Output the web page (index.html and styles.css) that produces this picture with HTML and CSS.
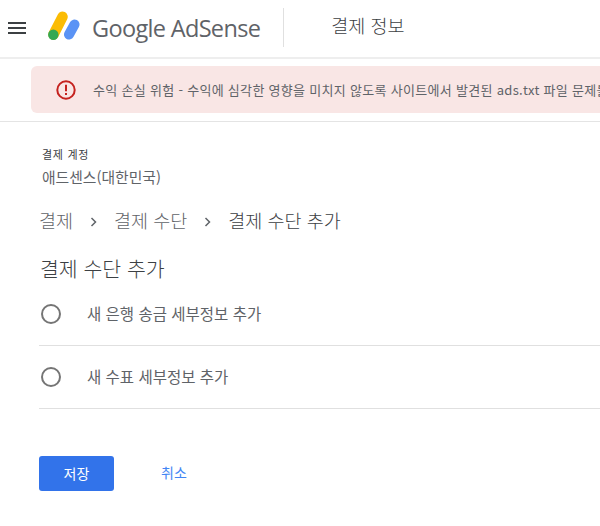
FILE: index.html
```html
<!DOCTYPE html>
<html lang="ko">
<head>
<meta charset="utf-8">
<title>결제 정보</title>
<link rel="stylesheet" href="styles.css">
</head>
<body>
<header class="topbar">
  <svg class="menu" width="18" height="12" viewBox="0 0 18 12"><path d="M0 0h18v2H0zM0 5h18v2H0zM0 10h18v2H0z" fill="#3c4043"/></svg>
  <svg class="logo" width="32" height="29" viewBox="0 0 32 29">
    <path d="M5.500 23.500L14.500 5.800" stroke="#fbbc04" stroke-width="10.500" stroke-linecap="round" fill="none"/>
    <path d="M21 23.500L26.500 13.500" stroke="#5a93f5" stroke-width="10" stroke-linecap="round" fill="none"/>
    <circle cx="5.300" cy="23.700" r="5.200" fill="#34a853"/>
  </svg>
  <span class="brand">Google AdSense</span>
  <span class="divider"></span>
  <span class="title">결제 정보</span>
</header>
<section class="alert-band">
  <div class="alert">
    <svg class="alert-icon" width="20" height="20" viewBox="0 0 20 20"><circle cx="10" cy="10" r="8.700" fill="none" stroke="#c5221f" stroke-width="2"/><path d="M9 4.800h2v6.500H9zM9 13h2v2.100H9z" fill="#c5221f"/></svg>
    <span class="alert-text">수익 손실 위험 - 수익에 심각한 영향을 미치지 않도록 사이트에서 발견된 ads.txt 파일 문제를</span>
  </div>
</section>
<main class="content">
  <div class="account-label">결제 계정</div>
  <div class="account-name">애드센스(대한민국)</div>
  <nav class="crumbs">
    <span>결제</span>
    <svg width="8" height="10" viewBox="0 0 8 10"><path d="M1.500 1l4 4-4 4" fill="none" stroke="#5f6368" stroke-width="1.500"/></svg>
    <span>결제 수단</span>
    <svg width="8" height="10" viewBox="0 0 8 10"><path d="M1.500 1l4 4-4 4" fill="none" stroke="#5f6368" stroke-width="1.500"/></svg>
    <span class="crumb-current">결제 수단 추가</span>
  </nav>
  <h1 class="heading">결제 수단 추가</h1>
  <div class="options">
    <label class="option"><span class="radio"></span><span class="option-text">새 은행 송금 세부정보 추가</span></label>
    <label class="option"><span class="radio"></span><span class="option-text">새 수표 세부정보 추가</span></label>
  </div>
  <div class="actions">
    <button class="save">저장</button>
    <button class="cancel">취소</button>
  </div>
</main>
</body>
</html>
```
FILE: styles.css
```css
* { box-sizing: border-box; }
html, body { margin: 0; height: 100%; }
body {
  width: 600px;
  height: 526px;
  overflow: hidden;
  background: #fff;
  font-family: "Noto Sans CJK KR", "Noto Sans", sans-serif;
  color: #5f6368;
}
.topbar {
  height: 59px;
  display: flex;
  align-items: center;
  border-bottom: 2px solid #eeeeee;
  padding-left: 8px;
}
.menu { flex: none; margin-top: -2px; }
.logo { flex: none; margin-left: 22px; margin-top: -7px; }
.brand {
  margin-left: 12px;
  font-family: "Open Sans", sans-serif;
  font-size: 23.500px;
  letter-spacing: -0.66px;
  color: #5f6368;
  white-space: nowrap;
  margin-top: -2px;
}
.divider { width: 1px; height: 39px; background: #e0e0e0; margin-left: 23px; margin-top: -2px; }
.title { margin-left: 47px; font-size: 18.500px; color: #3c4043; margin-top: -7px; font-weight: 300; }
.alert-band {
  height: 63px;
  padding: 7px 0 8px 31px;
  border-bottom: 1px solid #e4e4e4;
  overflow: hidden;
}
.alert {
  width: 640px;
  height: 47px;
  display: flex;
  align-items: center;
  background: #f9e6e5;
  border-radius: 6px;
  padding-left: 25px;
}
.alert-icon { flex: none; }
.alert-text { margin-left: 17px; font-size: 13px; white-space: nowrap; color: #5f6368; letter-spacing: .3px; }
.content { padding: 25px 0 0 39px; }
.account-label { margin-left: 3px; font-size: 11px; line-height: 14px; color: #3c4043; letter-spacing: .7px; }
.account-name { margin-left: 3px; margin-top: 7px; font-size: 14.800px; line-height: 18px; color: #5f6368; }
.crumbs {
  margin-top: 22px;
  display: flex;
  align-items: center;
  font-size: 18.500px;
  line-height: 24px;
  color: #5f6368;
  font-weight: 300;
}
.crumbs svg { margin: 3px 16px 0 17px; flex: none; }
.crumb-current { color: #3c4043; }
.heading { margin: 23px 0 0; padding-left: 1px; font-size: 20.500px; line-height: 26px; font-weight: 300; color: #3c4043; }
.options { margin-top: 2px; }
.option {
  height: 63px;
  display: flex;
  align-items: center;
  border-bottom: 1px solid #e0e0e0;
  font-size: 15.500px;
  color: #5f6368;
}
.option-text { margin-bottom: 2px; }
.radio {
  width: 20px;
  height: 20px;
  margin: 0 26px 0 2px;
  border: 2px solid #757575;
  border-radius: 50%;
  flex: none;
}
.actions { margin-top: 47px; display: flex; align-items: center; }
.save {
  width: 75px;
  height: 35px;
  border: 0;
  border-radius: 3px;
  background: #3273ea;
  color: #fff;
  font: inherit;
  font-size: 14px;
  padding-bottom: 3px;
}
.cancel {
  margin-left: 47px;
  padding: 0 0 3px;
  border: 0;
  background: none;
  font: inherit;
  font-size: 14px;
  color: #4285f4;
}
```
